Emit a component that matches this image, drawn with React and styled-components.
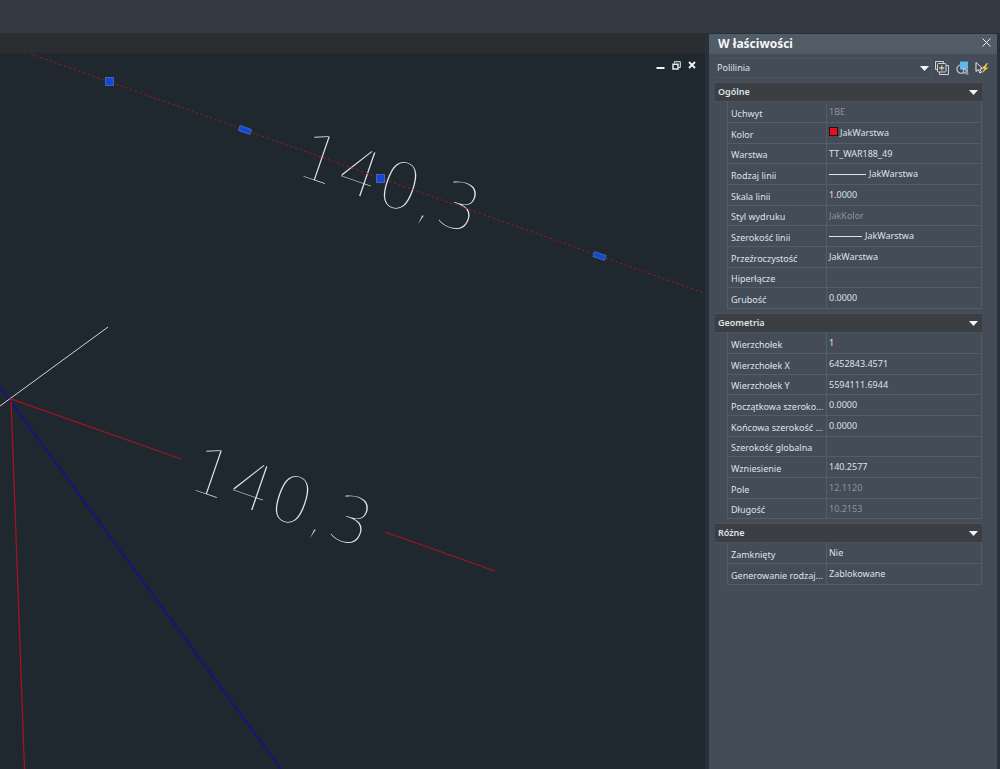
import React, { useState } from "react";
import styled, { createGlobalStyle } from "styled-components";

const c = {
  frame: "#323943",
  strip: "#2b2e31",
  canvas: "#1f282f",
  gutter: "#28313b",
  panel: "#434c57",
  title: "#515c67",
  section: "#3b3e43",
  line: "#525d68",
  text: "#dfe3e7",
  muted: "#8d949c",
  red: "#a5131f",
  blue: "#15157a",
  grip: "#1546d8",
  gripEdge: "#3a68b4",
};

const GlobalStyle = createGlobalStyle`
  *, *::before, *::after { box-sizing: border-box; }
  body {
    margin: 0;
    background: ${c.frame};
    color: ${c.text};
    font: 9px/12px "Noto Sans", "Open Sans", sans-serif;
  }
  button, select { font: inherit; color: inherit; }
`;

const Shell = styled.div`
  display: flex;
  flex-direction: column;
  min-height: 100vh;
`;

const Ribbon = styled.header`
  height: 33px;
  background: ${c.frame};
`;

const Workspace = styled.div`
  flex: 1;
  display: grid;
  grid-template-columns: minmax(0, 1fr) 288px;
  column-gap: 4px;
  padding-right: 3px;
  background: ${c.gutter};
`;

const Document = styled.main`
  display: flex;
  flex-direction: column;
  background: ${c.canvas};
`;

const TabStrip = styled.div`
  height: 20px;
  background: ${c.strip};
`;

const Viewport = styled.div`
  position: relative;
  flex: 1;
  display: flex;
`;

const Drawing = styled.svg`
  flex: 1;
  min-width: 0;
  overflow: hidden;
`;

const WindowControls = styled.div`
  position: absolute;
  top: 4px;
  right: 5px;
  display: flex;
`;

const IconButton = styled.button`
  display: flex;
  align-items: center;
  justify-content: center;
  width: ${(p) => p.$size}px;
  height: ${(p) => p.$size}px;
  padding: 0;
  border: 0;
  background: none;
`;

/* The outline in the canvas colour trims the glyphs to hairline strokes. */
const Dimension = styled.text`
  font-family: "DejaVu Sans", sans-serif;
  font-weight: 200;
  font-size: 66px;
  fill: #dfe4e6;
  stroke: ${c.canvas};
  stroke-width: 2px;
`;

const Panel = styled.aside`
  margin-top: 1px;
  background: ${c.panel};
`;

const PanelTitle = styled.div`
  display: flex;
  align-items: center;
  justify-content: space-between;
  height: 20px;
  padding: 0 3px 0 9px;
  background: ${c.title};

  h1 {
    margin: 0;
    font-size: 12px;
    line-height: 20px;
    font-weight: 700;
    color: #f4f6f8;
  }

  button { margin-bottom: 4px; }
`;

const Toolbar = styled.div`
  display: flex;
  align-items: center;
  padding: 4px 5px;
`;

const ObjectPicker = styled.div`
  position: relative;
  flex: 1;

  select {
    display: block;
    width: 100%;
    height: 20px;
    padding: 0 20px 0 3px;
    border: 1px solid #4b555f;
    border-left: 0;
    border-radius: 0;
    background: ${c.panel};
    appearance: none;
  }

  svg {
    position: absolute;
    right: 3px;
    top: 8px;
    pointer-events: none;
  }
`;

const Sections = styled.div`
  display: grid;
  row-gap: 4px;
  padding: 0 15px 0 6px;
`;

const SectionButton = styled.button`
  display: flex;
  align-items: center;
  justify-content: space-between;
  width: 100%;
  height: 20px;
  padding: 0 4px 0 3px;
  border: 1px solid #4b545e;
  border-width: 1px 0;
  background: ${c.section};
  font-weight: 600;
`;

const Grid = styled.table`
  width: calc(100% - 12px);
  margin-left: 12px;
  border-collapse: separate;
  border-spacing: 0;
  table-layout: fixed;
  border-right: 1px solid ${c.line};

  tr { height: 21px; }
  tr:nth-child(3n) { height: 20px; }

  th, td {
    padding: 0 2px;
    border-left: 1px solid ${c.line};
    border-bottom: 1px solid ${c.line};
    text-align: left;
    vertical-align: middle;
    font-weight: 400;
    white-space: nowrap;
  }
  th {
    width: 99px;
    padding: 3px 0 0 3px;
  }
`;

const Value = styled.td`
  color: ${(p) => (p.$muted ? c.muted : c.text)};
`;

const Swatch = styled.span`
  display: inline-block;
  width: 9px;
  height: 9px;
  margin-right: 2px;
  border: 1px solid #2a0d12;
  background: #e60f1c;
`;

const LineSample = styled.span`
  display: inline-block;
  width: ${(p) => p.$length}px;
  height: 1px;
  margin-right: 3px;
  vertical-align: middle;
  background: ${c.text};
`;

const Arrow = () => (
  <svg width="9" height="5" viewBox="0 0 9 5" aria-hidden="true">
    <path d="M0 0h9L4.5 5z" fill="#f2f4f6" />
  </svg>
);

const sections = [
  {
    name: "Ogólne",
    rows: [
      { label: "Uchwyt", value: "1BE", muted: true },
      { label: "Kolor", value: "JakWarstwa", swatch: true },
      { label: "Warstwa", value: "TT_WAR188_49" },
      { label: "Rodzaj linii", value: "JakWarstwa", line: 37 },
      { label: "Skala linii", value: "1.0000" },
      { label: "Styl wydruku", value: "JakKolor", muted: true },
      { label: "Szerokość linii", value: "JakWarstwa", line: 33 },
      { label: "Przeźroczystość", value: "JakWarstwa" },
      { label: "Hiperłącze", value: "" },
      { label: "Grubość", value: "0.0000" },
    ],
  },
  {
    name: "Geometria",
    rows: [
      { label: "Wierzchołek", value: "1" },
      { label: "Wierzchołek X", value: "6452843.4571" },
      { label: "Wierzchołek Y", value: "5594111.6944" },
      { label: "Początkowa szeroko...", value: "0.0000" },
      { label: "Końcowa szerokość ...", value: "0.0000" },
      { label: "Szerokość globalna", value: "" },
      { label: "Wzniesienie", value: "140.2577" },
      { label: "Pole", value: "12.1120", muted: true },
      { label: "Długość", value: "10.2153", muted: true },
    ],
  },
  {
    name: "Różne",
    rows: [
      { label: "Zamknięty", value: "Nie" },
      { label: "Generowanie rodzaj...", value: "Zablokowane" },
    ],
  },
];

function Section({ name, rows }) {
  const [open, setOpen] = useState(true);
  return (
    <section>
      <SectionButton type="button" aria-expanded={open} onClick={() => setOpen(!open)}>
        {name}
        <Arrow />
      </SectionButton>
      {open && (
        <Grid aria-label={name}>
          <tbody>
            {rows.map((row) => (
              <tr key={row.label}>
                <th scope="row">{row.label}</th>
                <Value $muted={row.muted}>
                  {row.swatch && <Swatch />}
                  {row.line && <LineSample $length={row.line} />}
                  {row.value}
                </Value>
              </tr>
            ))}
          </tbody>
        </Grid>
      )}
    </section>
  );
}

function Scene() {
  return (
    <Drawing aria-label="Rysunek">
      <Dimension transform="translate(293 121) rotate(19)">140,3</Dimension>
      <Dimension transform="translate(185 435) rotate(19)">140,3</Dimension>

      <path d="M0 334L281 716" stroke={c.blue} strokeWidth="2" fill="none" />
      <path d="M0 353L108 274" stroke="#cfd5d8" fill="none" />
      <path d="M181 406L11 346L24.500 716M385 479L495 518" stroke={c.red} strokeWidth="1.300" fill="none" />
      <path d="M31 1L704 240" stroke={c.red} strokeDasharray="2.500 2.500" fill="none" />

      <g fill={c.grip} stroke={c.gripEdge}>
        <rect x="105.500" y="24.500" width="8" height="8" />
        <rect x="376.500" y="121.500" width="8" height="8" />
        <rect x="-6" y="-2.500" width="12" height="5" transform="translate(245 77) rotate(19)" />
        <rect x="-6" y="-2.500" width="12" height="5" transform="translate(599.500 203) rotate(19)" />
      </g>
    </Drawing>
  );
}

export default function App() {
  return (
    <>
      <GlobalStyle />
      <Shell>
        <Ribbon />
        <Workspace>
          <Document>
            <TabStrip />
            <Viewport>
              <Scene />
              <WindowControls>
                <IconButton type="button" $size={16} aria-label="Minimalizuj">
                  <svg width="9" height="9" viewBox="0 0 9 9">
                    <path d="M0.500 7h8" stroke="#f2f4f4" strokeWidth="2" />
                  </svg>
                </IconButton>
                <IconButton type="button" $size={16} aria-label="Przywróć">
                  <svg width="9" height="9" viewBox="0 0 9 9" fill="none" stroke="#e6eaea">
                    <path d="M2.500 2V0.700H8.300V6.500H7" />
                    <path d="M1 3.200H6V8H1z" strokeWidth="1.500" />
                  </svg>
                </IconButton>
                <IconButton type="button" $size={16} aria-label="Zamknij rysunek">
                  <svg width="8" height="8" viewBox="0 0 8 8">
                    <path d="M1 1l6 6M7 1l-6 6" stroke="#f2f4f4" strokeWidth="1.800" />
                  </svg>
                </IconButton>
              </WindowControls>
            </Viewport>
          </Document>

          <Panel>
            <PanelTitle>
              <h1>W łaściwości</h1>
              <IconButton type="button" $size={16} aria-label="Zamknij">
                <svg width="9" height="9" viewBox="0 0 9 9">
                  <path d="M0.500 0.500l8 8M8.500 0.500l-8 8" stroke="#eef1f3" />
                </svg>
              </IconButton>
            </PanelTitle>
            <Toolbar>
              <ObjectPicker>
                <select aria-label="Typ obiektu" defaultValue="Polilinia">
                  <option>Polilinia</option>
                </select>
                <Arrow />
              </ObjectPicker>
              <IconButton type="button" $size={20} aria-label="Przełącz PICKADD">
                <svg width="14" height="14" viewBox="0 0 14 14" fill="none" stroke="#cdd1d4">
                  <path d="M2.500 8.500h-2v-8h8v2M11 4.500h2.500v9h-9V11" />
                  <rect x="2.500" y="2.500" width="8.500" height="8.500" rx="1" />
                  <path d="M6.750 4.500v5M4.250 7h5" stroke="#d6c59a" strokeWidth="1.300" />
                </svg>
              </IconButton>
              <IconButton type="button" $size={20} aria-label="Wybierz obiekty">
                <svg width="14" height="14" viewBox="0 0 14 14" fill="none">
                  <path d="M5 4A4.200 4.200 0 1 0 8.500 11.500" stroke="#b9c9d6" strokeWidth="1.200" />
                  <rect x="5" y="0.500" width="8" height="8" fill="#64b6ee" />
                  <path d="M8 7.500l0.800 5 1.500-1.300 1.700 2.300 1-1-1.600-2 1.600-.600z" fill="#55606a" stroke="#e3e7ea" strokeWidth="0.800" />
                </svg>
              </IconButton>
              <IconButton type="button" $size={20} aria-label="Szybki wybór">
                <svg width="14" height="14" viewBox="0 0 14 14" fill="none">
                  <path d="M1 1.500v9l2.300-2 1.500 3.500 1.600-.800-1.500-3.200 2.500-.500z" fill="#39424c" stroke="#edf0f2" />
                  <path d="M12 2L6.500 7.500h2.800L6.500 12.500L13.500 6.500h-3L13 2z" fill="#f3c64a" />
                </svg>
              </IconButton>
            </Toolbar>
            <Sections>
              {sections.map((s) => (
                <Section key={s.name} {...s} />
              ))}
            </Sections>
          </Panel>
        </Workspace>
      </Shell>
    </>
  );
}
